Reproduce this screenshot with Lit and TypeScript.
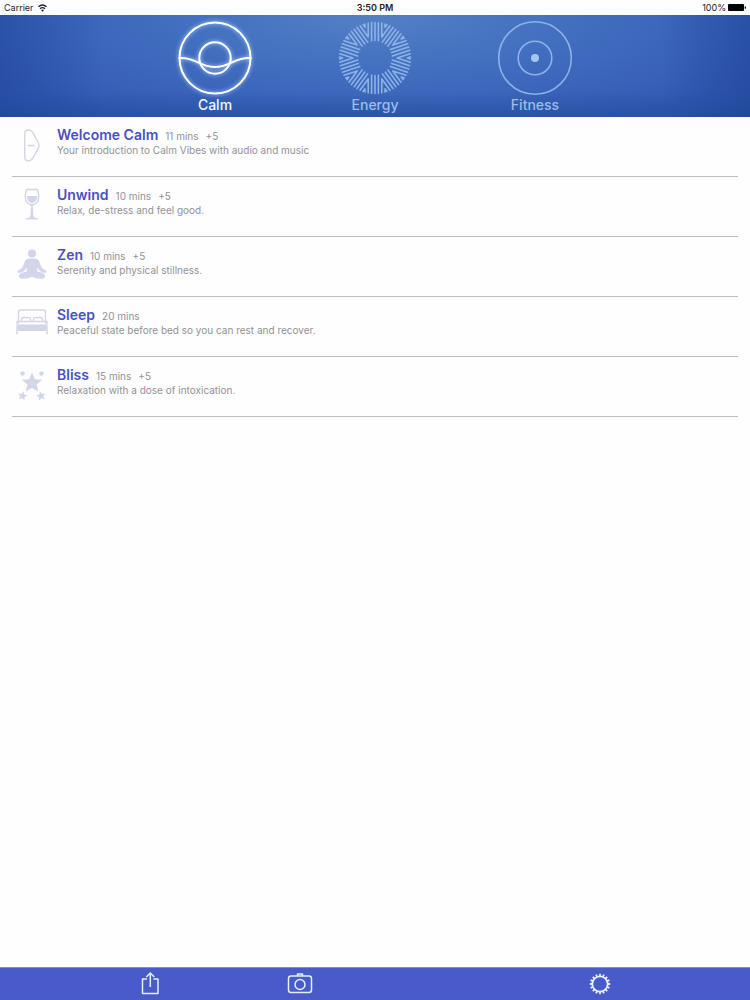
import { LitElement, html, svg, css } from "lit";
import { customElement, property, state } from "lit/decorators.js";
import { classMap } from "lit/directives/class-map.js";

interface Session {
  icon: string;
  title: string;
  time: string;
  extra: string;
  text: string;
}

const SESSIONS: Session[] = [
  { icon: "welcome", title: "Welcome Calm", time: "11 mins", extra: "+5", text: "Your introduction to Calm Vibes with audio and music" },
  { icon: "wine", title: "Unwind", time: "10 mins", extra: "+5", text: "Relax, de-stress and feel good." },
  { icon: "zen", title: "Zen", time: "10 mins", extra: "+5", text: "Serenity and physical stillness." },
  { icon: "bed", title: "Sleep", time: "20 mins", extra: "", text: "Peaceful state before bed so you can rest and recover." },
  { icon: "stars", title: "Bliss", time: "15 mins", extra: "+5", text: "Relaxation with a dose of intoxication." },
];

const RAD = Math.PI / 180;

/** Star outline with five points around (cx, cy). */
function star(cx: number, cy: number, r: number, turn = 0, inner = 0.42): string {
  return Array.from({ length: 10 }, (_, i) => {
    const a = (i * 36 - 90 + turn) * RAD;
    const d = i % 2 ? r * inner : r;
    return `${(cx + d * Math.cos(a)).toFixed(2)},${(cy + d * Math.sin(a)).toFixed(2)}`;
  }).join(" ");
}

/** Ten wedges of nested chevrons that form the sun ring. */
function burst(): string {
  const inner = 17.5;
  const outer = 35.5;
  const half = 18 * RAD;
  let d = "";
  for (let k = 0; k < 10; k++) {
    const axis = k * 36 * RAD;
    const at = (x: number, y: number) =>
      `${(x * Math.cos(axis) - y * Math.sin(axis)).toFixed(2)} ${(x * Math.sin(axis) + y * Math.cos(axis)).toFixed(2)}`;
    const point = (along: number, gap: number, side: number) =>
      at(along * Math.cos(half) + gap * Math.sin(half), side * (along * Math.sin(half) - gap * Math.cos(half)));
    const reach = (gap: number, r: number) => Math.sqrt(r * r - gap * gap);
    d += `M${point(inner, 0, 1)}L${point(outer, 0, 1)}`;
    for (const side of [1, -1]) d += `M${point(reach(3.4, inner), 3.4, side)}L${point(reach(3.4, outer), 3.4, side)}`;
    for (const gap of [6.8, 10]) {
      d += `M${point(reach(gap, outer), gap, 1)}L${at(gap / Math.sin(half), 0)}L${point(reach(gap, outer), gap, -1)}`;
    }
  }
  return d;
}

/** Teeth around the settings wheel. */
function teeth(): string {
  return Array.from({ length: 16 }, (_, i) => {
    const a = i * 22.5 * RAD;
    return `M${(8 * Math.cos(a)).toFixed(2)} ${(8 * Math.sin(a)).toFixed(2)}L${(10.2 * Math.cos(a)).toFixed(2)} ${(10.2 * Math.sin(a)).toFixed(2)}`;
  }).join("");
}

const TAB_ICONS: Record<string, unknown> = {
  Calm: svg`
    <circle cx="0" cy="0" r="35.5"></circle>
    <circle cx="0" cy="0" r="15.7"></circle>
    <path d="M-35.5 0C-19-1-16 9 0 9S19-1 35.5 0"></path>`,
  Energy: svg`<path d=${burst()}></path>`,
  Fitness: svg`
    <circle cx="0" cy="0" r="36.3"></circle>
    <circle cx="0" cy="0" r="16.8"></circle>
    <circle class="dot" cx="0" cy="0" r="4"></circle>`,
};

const ROW_ICONS: Record<string, unknown> = {
  welcome: svg`<path class="line" d="M8.700 6Q8.700 2 12.500 2C16.500 2 17.500 6 19 8.500Q23 15 23 17.500T19 26C17.500 29 16.500 33 12.500 33Q8.700 33 8.700 29ZM12 17.500h6"></path>`,
  wine: svg`
    <path class="line" d="M10.500 1.500h11C23.500 8 23.500 15 17.500 16.500Q16 17 14.500 16.500C8.500 15 8.500 8 10.500 1.500Z"></path>
    <path d="M11 8h10.200q0 6-5.200 7.300-5-1.300-5-7.300ZM15.200 16h1.600l.6 12q.6 2.200 5 2.500v1H9.400v-1q4.400-.3 5-2.500Z"></path>`,
  zen: svg`
    <circle cx="16" cy="5.500" r="4"></circle>
    <path d="M12.500 10.500h7q2.500 0 3.500 2.500l3 7 4.500 3q.7 1.200-.8 1.800-4.700 0-6-2.300L21.500 19.500l-.3 4q7.500 1.400 7.800 4.500.2 2.500-3.500 2.700-5 .3-7.500-1.200l-2-1-2 1Q11.500 31 6.500 30.700q-3.700-.2-3.500-2.700.3-3.100 7.800-4.500l-.3-4-2.200 3Q7 24.800 2.300 24.800q-1.500-.6-.8-1.800L6 20l3-7q1-2.500 3.500-2.500Z"></path>`,
  bed: svg`
    <path class="line" d="M2.500 15V3.500Q2.500 2 4 2h24q1.500 0 1.500 1.500V15M1 26V13.500h30V26M5.500 13v-1.500q0-2 2-2h5q2 0 2 2V13M17.500 13v-1.500q0-2 2-2h5q2 0 2 2V13"></path>
    <path d="M1.500 16.500h29v6.500h-29Z"></path>`,
  stars: svg`
    <polygon points=${star(16, 15, 10.8, 0, 0.44)}></polygon>
    <circle cx="6.500" cy="5.500" r="2.200"></circle>
    <circle cx="25.500" cy="5.500" r="2.200"></circle>
    <polygon points=${star(6.5, 28, 5.2, 12, 0.4)}></polygon>
    <polygon points=${star(25, 28, 5.2, -12, 0.4)}></polygon>`,
};

@customElement("tab-button")
class TabButton extends LitElement {
  @property() name = "";
  @property({ type: Boolean }) active = false;

  static styles = css`
    :host { display: block; flex: 0 1 160px; }
    .tab {
      display: flex; flex-direction: column; align-items: center; width: 100%;
      padding: 5px 0 0; border: 0; background: none; cursor: pointer;
      font: 500 14px/18px Inter, sans-serif; color: #9dbce9;
    }
    .active { color: #f2f8ff; }
    .icon { width: 76px; height: 76px; fill: none; stroke: #8db2e6; stroke-width: 1.6; stroke-linecap: round; stroke-linejoin: round; overflow: visible; }
    .active .icon { stroke: #fff; stroke-width: 2; filter: drop-shadow(0 0 2px #b9dcff); }
    .dot { fill: #a5c6f3; stroke: none; }
  `;

  render() {
    return html`
      <button class=${classMap({ tab: true, active: this.active })} aria-pressed=${this.active ? "true" : "false"}>
        <svg class="icon" viewBox="-38 -38 76 76" aria-hidden="true">${TAB_ICONS[this.name]}</svg>
        <span>${this.name}</span>
      </button>`;
  }
}

@customElement("session-row")
class SessionRow extends LitElement {
  @property({ attribute: false }) session!: Session;

  static styles = css`
    :host { display: block; }
    .row {
      display: flex; gap: 9px; box-sizing: border-box; min-height: 60px; padding: 10px 4px 6px;
      border-bottom: 1px solid #bcbcc2; color: #929196; text-decoration: none;
    }
    .icon { flex: none; width: 32px; height: 38px; margin-top: 1px; fill: #d3d6e9; overflow: visible; }
    .line { fill: none; stroke: #d5d6e4; stroke-width: 1.4; stroke-linejoin: round; stroke-linecap: round; }
    .head { display: flex; align-items: baseline; gap: 7px; line-height: 16px; font-size: 10px; }
    .title { margin: 0; font-size: 14px; line-height: 16px; font-weight: 600; color: #4a50c4; }
    .text { margin: 0; font-size: 10px; line-height: 12px; }
  `;

  render() {
    const s = this.session;
    return html`
      <a class="row" href="#${s.icon}">
        <svg class="icon" viewBox="0 0 32 38" aria-hidden="true">${ROW_ICONS[s.icon]}</svg>
        <div>
          <div class="head">
            <h2 class="title">${s.title}</h2>
            <span>${s.time}</span>
            ${s.extra ? html`<span>${s.extra}</span>` : null}
          </div>
          <p class="text">${s.text}</p>
        </div>
      </a>`;
  }
}

@customElement("app-root")
class AppRoot extends LitElement {
  @state() private current = "Calm";

  static styles = css`
    :host { display: flex; flex-direction: column; min-height: 100vh; background: #fefefe; font-family: Inter, sans-serif; }
    .status {
      display: grid; grid-template-columns: 1fr auto 1fr; align-items: center; height: 15px; padding: 0 4px;
      font: 9px/15px Inter, sans-serif; color: #222;
    }
    .side { display: flex; align-items: center; gap: 4px; }
    .end { justify-content: flex-end; gap: 2px; }
    .clock { font-weight: 600; }
    .wifi { width: 9px; height: 8px; fill: none; stroke: #222; stroke-width: 1.3; }
    .battery { width: 18px; height: 7px; fill: #000; }
    .tabs {
      display: flex; justify-content: center; height: 102px;
      background:
        linear-gradient(90deg, rgba(20, 58, 138, .35), rgba(20, 58, 138, 0) 14%, rgba(20, 58, 138, 0) 88%, rgba(20, 58, 138, .4)),
        linear-gradient(180deg, rgba(30, 74, 150, 0) 75%, rgba(30, 74, 150, .5)),
        radial-gradient(ellipse 58% 120% at 50% 0, #5380c4, #426fc0 45%, #335ab3 100%);
    }
    .list { flex: 1; margin: 0; padding: 0 12px; list-style: none; }
    .toolbar {
      display: grid; grid-template-columns: repeat(4, 20%); justify-content: center; justify-items: center;
      height: 33px; background: #485bc8; border-top: 1px solid #7f8cda; box-sizing: border-box;
    }
    .tool { display: flex; align-items: center; justify-content: center; width: 40px; padding: 0; border: 0; background: none; cursor: pointer; }
    .settings { grid-column: 4; }
    .glyph { width: 26px; height: 24px; fill: none; stroke: #e4efff; stroke-width: 1.5; overflow: visible; stroke-linejoin: round; }
    .gear { stroke-width: 1.8; }
  `;

  render() {
    return html`
      <header>
        <div class="status">
          <div class="side">
            <span>Carrier</span>
            <svg class="wifi" viewBox="0 0 9 8" aria-hidden="true">
              <path d="M.5 2.800Q4.500-.9 8.500 2.800M2 4.700Q4.500 2.500 7 4.700"></path>
              <path fill="#222" stroke="none" d="M3 6Q4.500 4.800 6 6L4.500 7.700Z"></path>
            </svg>
          </div>
          <span class="clock">3:50 PM</span>
          <div class="side end">
            <span>100%</span>
            <svg class="battery" viewBox="0 0 18 7" aria-hidden="true">
              <rect width="16" height="7" rx="1"></rect>
              <rect x="16.700" y="2.200" width="1.200" height="2.600" rx=".6"></rect>
            </svg>
          </div>
        </div>
        <nav class="tabs">
          ${["Calm", "Energy", "Fitness"].map(
            (name) => html`<tab-button .name=${name} .active=${name === this.current} @click=${() => (this.current = name)}></tab-button>`
          )}
        </nav>
      </header>
      <ul class="list">
        ${SESSIONS.map((s) => html`<li><session-row .session=${s}></session-row></li>`)}
      </ul>
      <footer class="toolbar">
        <button class="tool" aria-label="Share">
          <svg class="glyph" viewBox="0 0 26 24"><path d="M10 7H5.500V21.500h15.500V7H16.500M13.300 15V2M9.300 5 13.300 1l4 4"></path></svg>
        </button>
        <button class="tool" aria-label="Camera">
          <svg class="glyph" viewBox="0 0 26 24">
            <rect x="1.500" y="4" width="23" height="16.500" rx="2.500"></rect>
            <path d="M10.500 4V2h5v2"></path>
            <circle cx="13" cy="12.500" r="5"></circle>
          </svg>
        </button>
        <button class="tool settings" aria-label="Settings">
          <svg class="glyph gear" viewBox="-13 -12 26 24"><circle r="7.700"></circle><path d=${teeth()}></path></svg>
        </button>
      </footer>`;
  }
}
